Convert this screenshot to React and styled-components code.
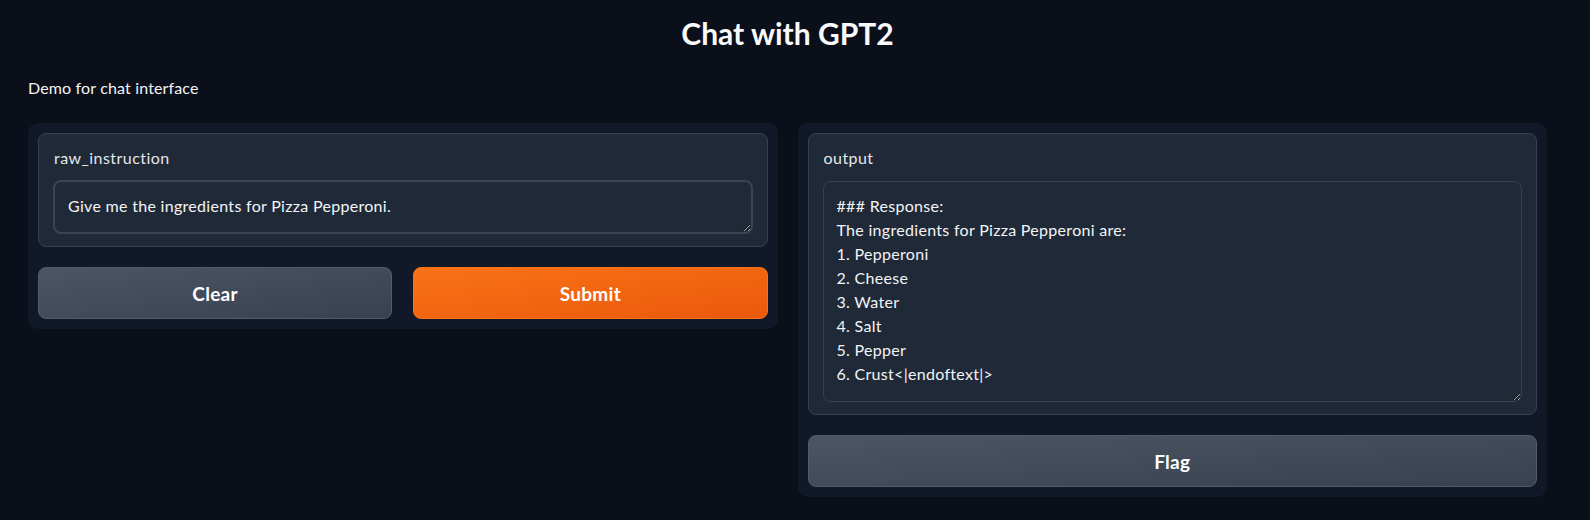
import React from 'react';
import styled, { createGlobalStyle } from 'styled-components';

const GlobalStyle = createGlobalStyle`
    html, body {
        margin: 0;
        padding: 0;
        background-color: #0b0f19;
    }
    body {
        font-family: Lato, "Open Sans", sans-serif;
        color: #f3f4f6;
    }
`;

const output_text = [
    '### Response:',
    'The ingredients for Pizza Pepperoni are:',
    '1. Pepperoni',
    '2. Cheese',
    '3. Water',
    '4. Salt',
    '5. Pepper',
    '6. Crust<|endoftext|>',
].join('\n');

const App = () => {
    return (
        <Page>
            <GlobalStyle />
            <Title>Chat with GPT2</Title>
            <Description>Demo for chat interface</Description>
            <Columns>
                <Panel>
                    <Block>
                        <Label>raw_instruction</Label>
                        <TextBox
                            height="54px"
                            focused
                            readOnly
                            value="Give me the ingredients for Pizza Pepperoni."
                        />
                    </Block>
                    <ButtonRow>
                        <Button>Clear</Button>
                        <Button primary>Submit</Button>
                    </ButtonRow>
                </Panel>
                <Panel>
                    <Block>
                        <Label>output</Label>
                        <TextBox height="221px" offset="1px" readOnly value={output_text} />
                    </Block>
                    <Button>Flag</Button>
                </Panel>
            </Columns>
        </Page>
    );
};

const Page = styled.div`
    width: 1575px;
    box-sizing: border-box;
    padding: 15px 28px 0 28px;
`;

const Title = styled.h1`
    margin: 0;
    text-align: center;
    font-size: 30px;
    line-height: 36px;
    font-weight: 700;
    color: #f9fafb;
`;

const Description = styled.p`
    margin: 25px 0 0 0;
    font-size: 16px;
    line-height: 24px;
    letter-spacing: 0.15px;
    color: #f3f4f6;
`;

const Columns = styled.div`
    display: grid;
    grid-template-columns: 1fr 1fr;
    gap: 20px;
    align-items: start;
    margin-top: 23px;
`;

const Panel = styled.div`
    display: flex;
    flex-direction: column;
    gap: 20px;
    padding: 10px;
    border-radius: 10px;
    background-color: #111827;
`;

const Block = styled.div`
    display: flex;
    flex-direction: column;
    padding: 12px 14px 12px 14px;
    border: 1px solid #374151;
    border-radius: 8px;
    background-color: #1f2937;
`;

const Label = styled.span`
    padding-left: 1px;
    font-size: 16px;
    line-height: 24px;
    letter-spacing: 0.45px;
    color: #e5e7eb;
    margin-bottom: 10px;
`;

const TextBox = styled.textarea`
    display: block;
    box-sizing: border-box;
    width: 100%;
    height: ${props => props.height};
    margin-top: ${props => props.offset || '0'};
    padding: 12px 13px;
    border: ${props => props.focused ? '2px solid #3b4453' : '1px solid #374151'};
    border-radius: 8px;
    background-color: #1f2937;
    color: #f3f4f6;
    font-family: Lato, "Open Sans", sans-serif;
    font-size: 16px;
    line-height: 24px;
    letter-spacing: 0.3px;
    resize: vertical;
    outline: none;
    overflow: hidden;
`;

const ButtonRow = styled.div`
    display: flex;
    gap: 21px;
`;

const Button = styled.button`
    flex: 1 1 0;
    min-height: 52px;
    height: 52px;
    border-radius: 8px;
    border: 1px solid ${props => props.primary ? '#f97316' : '#535c6b'};
    background: ${props => props.primary
        ? 'linear-gradient(to bottom right, #f97316, #ea580c)'
        : 'linear-gradient(to bottom right, #4b5563, #374151)'};
    color: #ffffff;
    font-family: Lato, "Open Sans", sans-serif;
    font-size: 19px;
    font-weight: 700;
    letter-spacing: 0.3px;
    cursor: pointer;

    ${Panel} > & {
        flex: none;
    }
`;

export default App;
